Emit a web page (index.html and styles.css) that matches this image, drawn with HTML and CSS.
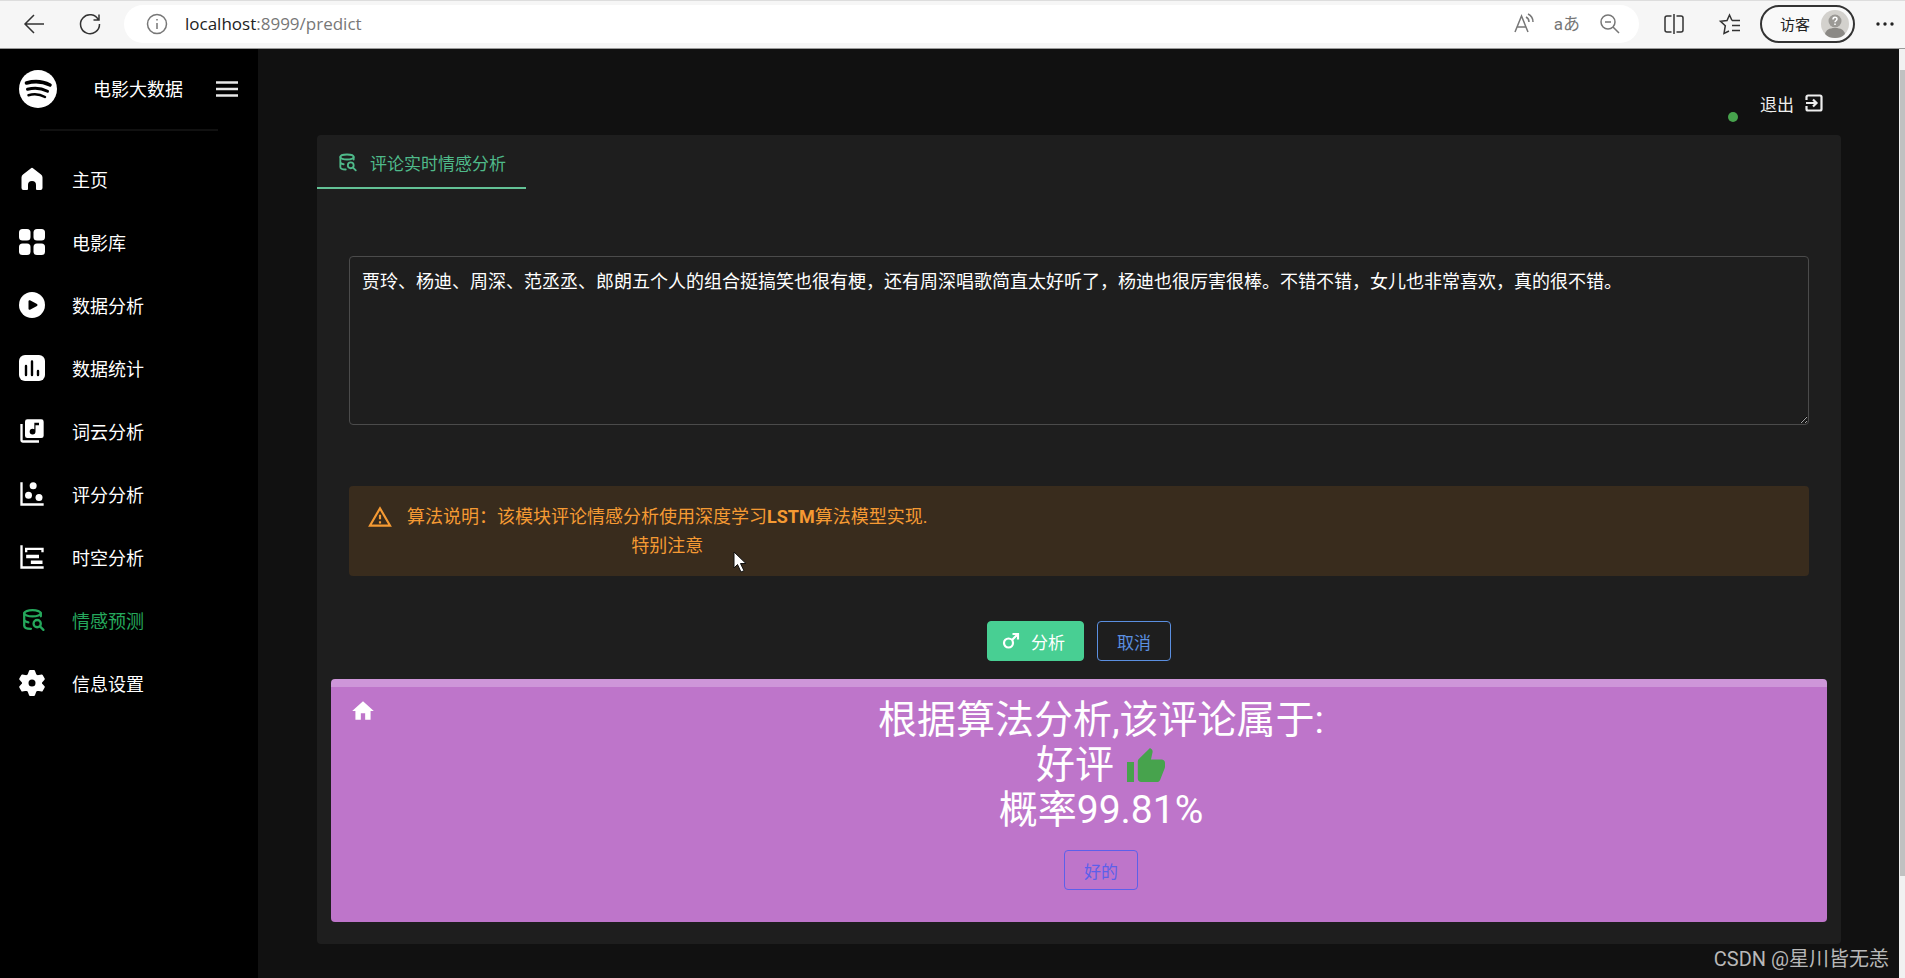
FILE: index.html
```html
<!DOCTYPE html>
<html lang="zh-CN">
<head>
<meta charset="utf-8">
<title>电影大数据</title>
<link rel="stylesheet" href="styles.css">
</head>
<body>
<svg class="defs" width="0" height="0" aria-hidden="true">
  <symbol id="db-search" viewBox="0 0 24 24">
    <g fill="none" stroke="currentColor" stroke-width="2.200" stroke-linecap="round" stroke-linejoin="round">
      <ellipse cx="12" cy="6" rx="8" ry="3"/>
      <path d="M4 6v6c0 1.200 1.600 2.300 4 2.700M20 6v3M4 12v6c0 1.700 2.700 3 6.500 3"/>
      <circle cx="16.500" cy="16" r="3.500"/><path d="m19.200 18.700 3.300 3.300"/>
    </g>
  </symbol>
</svg>

<header class="browser">
  <button class="tool" aria-label="后退"><svg viewBox="0 0 24 24" width="24" height="24"><path d="M22 12H3M12 3l-9 9 9 9"/></svg></button>
  <button class="tool reload" aria-label="刷新"><svg viewBox="0 0 24 24" width="24" height="24"><path d="M20.500 8A9.500 9.500 0 1 0 21.500 12M21 2.500V8h-5.500"/></svg></button>
  <div class="address">
    <svg class="grey" viewBox="0 0 24 24" width="24" height="24"><circle cx="12" cy="12" r="9.500"/><path d="M12 11v6M12 7v1.500"/></svg>
    <span class="url"><b>localhost</b>:8999/predict</span>
    <button class="tool grey" aria-label="大声朗读"><svg viewBox="0 0 24 24" width="24" height="24"><path d="M3 20 9.500 4 16 20M5.500 15h8M14 5c2 1 3 3 3 5M16 2c3 1.500 5 4.500 5 8"/></svg></button>
    <button class="tool translate" aria-label="翻译">aあ</button>
    <button class="tool grey" aria-label="缩小"><svg viewBox="0 0 24 24" width="24" height="24"><circle cx="10" cy="10" r="7"/><path d="m15 15 6 6M7 10h6"/></svg></button>
  </div>
  <button class="tool" aria-label="分屏"><svg viewBox="0 0 24 24" width="24" height="24"><path d="M9.500 4H5a2 2 0 0 0-2 2v12a2 2 0 0 0 2 2h4.500M14.500 4H19a2 2 0 0 1 2 2v12a2 2 0 0 1-2 2h-4.500M12 2v20"/></svg></button>
  <button class="tool" aria-label="收藏夹"><svg viewBox="0 0 24 24" width="24" height="24"><path d="M14 8.500 11.500 3 9 8.500l-6.500.8 4.800 4.400L6 21.500l5-2.500M14 8.500h8M14 13.500h8M14 18.500h8"/></svg></button>
  <button class="profile">访客
    <svg viewBox="0 0 28 28" width="28" height="28"><circle cx="14" cy="14" r="14" fill="#d3d1cd"/><path d="M4 24c1-4 4-6 10-6s9 2 10 6c-3 3-6 4-10 4s-7-1-10-4z" fill="#8b8985"/><circle cx="14" cy="11" r="6.500" fill="#9b9995"/><path d="M12 9.500c0-3 4-3 4-.5 0 1.700-2 1.700-2 3.200M14 13.600v1.400" fill="none" stroke="#fff" stroke-width="1.500"/></svg>
  </button>
  <button class="tool more" aria-label="更多"><svg viewBox="0 0 24 24" width="24" height="24"><g fill="#222" stroke="none"><circle cx="5" cy="12" r="1.700"/><circle cx="12" cy="12" r="1.700"/><circle cx="19" cy="12" r="1.700"/></g></svg></button>
</header>

<div class="app">
  <aside class="sidebar">
    <div class="brand">
      <svg viewBox="0 0 40 40" width="40" height="40"><circle cx="20" cy="20" r="19" fill="#fff"/><g fill="none" stroke="#000" stroke-linecap="round"><path d="M8.500 14c8-2.300 16.500-1.600 23.500 2" stroke-width="3.600"/><path d="M9.500 20.300c6.500-1.900 14-1.200 20 2" stroke-width="3"/><path d="M10.500 26.200c5.500-1.500 11.500-1 16.500 1.800" stroke-width="2.500"/></g></svg>
      <span class="brand-name">电影大数据</span>
      <button class="menu" aria-label="菜单"><svg viewBox="0 0 22 16" width="22" height="16"><path d="M0 1.500h22M0 8h22M0 14.500h22" stroke="#e8e8e8" stroke-width="2.400"/></svg></button>
    </div>
    <hr class="rule">
    <nav class="nav">
      <a href="#"><svg viewBox="0 0 28 28"><path d="M12.700 3.400 5 9.400A4 4 0 0 0 3.500 12.500V23a2 2 0 0 0 2 2h3.500a1 1 0 0 0 1-1v-4a4 4 0 0 1 8 0v4a1 1 0 0 0 1 1h3.500a2 2 0 0 0 2-2V12.500A4 4 0 0 0 23 9.400l-7.700-6a2 2 0 0 0-2.600 0z"/></svg>主页</a>
      <a href="#"><svg viewBox="0 0 28 28"><rect x="1" y="1" width="11.500" height="11.500" rx="3.500"/><rect x="15.500" y="1" width="11.500" height="11.500" rx="3.500"/><rect x="1" y="15.500" width="11.500" height="11.500" rx="3.500"/><rect x="15.500" y="15.500" width="11.500" height="11.500" rx="3.500"/></svg>电影库</a>
      <a href="#"><svg viewBox="0 0 28 28"><circle cx="14" cy="14" r="13"/><path d="M11.500 10.200v7.600l7-3.800z" fill="#000" stroke="#000" stroke-width="2" stroke-linejoin="round"/></svg>数据分析</a>
      <a href="#"><svg viewBox="0 0 28 28"><rect x="1" y="1" width="26" height="26" rx="6"/><path d="M8 12v9M14 7.500v13.500M20 17v4" stroke="#000" stroke-width="2.400" stroke-linecap="round"/></svg>数据统计</a>
      <a href="#"><svg viewBox="0 0 24 24"><path d="M20 2H8a2 2 0 0 0-2 2v12a2 2 0 0 0 2 2h12a2 2 0 0 0 2-2V4a2 2 0 0 0-2-2zm-2 5h-3v5.500A2.500 2.500 0 1 1 12.500 10c.57 0 1.080.19 1.500.510V5h4v2zM4 6H2v14a2 2 0 0 0 2 2h14v-2H4V6z"/></svg>词云分析</a>
      <a href="#"><svg viewBox="0 0 24 24"><path d="M2 2h2v18h18v2H2z"/><circle cx="9" cy="13" r="3"/><circle cx="13" cy="5" r="3"/><circle cx="18" cy="15" r="3"/></svg>评分分析</a>
      <a href="#"><svg viewBox="0 0 24 24"><path d="M2 2h2v18h18v2H2zM7 10h11v3H7zM11 15h10v3H11zM6 4h16v4h-2V6H8v2H6z"/></svg>时空分析</a>
      <a href="#" class="active"><svg viewBox="-2 -1 27 27"><use href="#db-search" width="24" height="24"/></svg>情感预测</a>
      <a href="#"><svg viewBox="0 0 28 28"><path fill-rule="evenodd" d="M12 2h4l1.500 4 2.200 1.300 4.100-.7 2 3.500-2.700 3v1.800l2.700 3-2 3.500-4.100-.7-2.200 1.300L16 26h-4l-1.500-4-2.200-1.300-4.100.7-2-3.500 2.700-3v-1.800l-2.700-3 2-3.500 4.100.7 2.200-1.300zM14 9.500a4.500 4.500 0 1 0 0 9 4.500 4.500 0 0 0 0-9z" stroke="currentColor" stroke-width="2" stroke-linejoin="round"/></svg>信息设置</a>
    </nav>
  </aside>

  <main class="main">
    <div class="topbar">
      <span class="status"></span>
      <a class="logout" href="#">退出
        <svg viewBox="0 0 18 18" width="18" height="18" fill="none" stroke="currentColor" stroke-width="2.200"><path d="M1.500 6V3a1.500 1.500 0 0 1 1.500-1.500h12A1.500 1.500 0 0 1 16.500 3v12a1.500 1.500 0 0 1-1.500 1.500H3A1.500 1.500 0 0 1 1.500 15v-3M1 9h10M8 5.500 11.500 9 8 12.500"/></svg>
      </a>
    </div>

    <section class="card">
      <div class="tabs" role="tablist">
        <button class="tab" role="tab" aria-selected="true"><svg viewBox="0 0 24 24" width="20" height="20"><use href="#db-search"/></svg>评论实时情感分析</button>
      </div>
      <div class="form">
        <textarea class="comment" aria-label="评论内容" spellcheck="false">贾玲、杨迪、周深、范丞丞、郎朗五个人的组合挺搞笑也很有梗，还有周深唱歌简直太好听了，杨迪也很厉害很棒。不错不错，女儿也非常喜欢，真的很不错。</textarea>
        <div class="notice">
          <svg viewBox="0 0 24 24" width="26" height="26" fill="currentColor"><path d="M12 5.990 19.530 19H4.470L12 5.990M12 2 1 21h22L12 2zm1 14h-2v2h2v-2zm0-6h-2v4h2v-4z"/></svg>
          <p class="notice-text">算法说明：该模块评论情感分析使用深度学习<strong>LSTM</strong>算法模型实现.<br>特别注意</p>
          <svg class="cursor" viewBox="0 0 14 22" width="14" height="22"><path d="M1 1v16l3.500-3.500L8 21l3-1.300L7.500 12.500H13z" fill="#fff" stroke="#111"/></svg>
        </div>
        <div class="actions">
          <button class="btn solid"><svg viewBox="0 0 18 18" width="18" height="18" fill="none" stroke="currentColor" stroke-width="2.200"><circle cx="6.500" cy="11" r="4.500"/><path d="m10 8 6-6M10.500 2H16v5.500"/></svg>分析</button>
          <button class="btn outline">取消</button>
        </div>
      </div>
      <div class="result">
        <svg viewBox="0 0 24 24" width="26" height="26" fill="#fff"><path d="M10 20v-6h4v6h5v-8h3L12 3 2 12h3v8z"/></svg>
        <div class="result-body">
          <p class="verdict">根据算法分析,该评论属于:</p>
          <p class="verdict">好评 <svg class="thumb" viewBox="0 0 40 36" width="40" height="36" fill="#47a34d"><path d="M1 14h7v20H1zM39 15c0-2-1.500-3.500-3.500-3.500H25l1.600-7.500v-.6c0-.7-.3-1.300-.7-1.800L24 0 12.800 11c-.7.600-1 1.500-1 2.400v17.300c0 1.900 1.500 3.300 3.400 3.300H31c1.400 0 2.600-.9 3.100-2.100l4.700-12c.1-.4.200-.8.200-1.200z"/></svg></p>
          <p class="verdict">概率99.81%</p>
          <button class="btn ok">好的</button>
        </div>
      </div>
    </section>
  </main>
  <div class="scrollbar"><span class="scroll-thumb"></span></div>
</div>
<div class="watermark">CSDN @星川皆无恙</div>
</body>
</html>
```
FILE: styles.css
```css
* { box-sizing: border-box; }

body {
  margin: 0;
  height: 100vh;
  display: flex;
  flex-direction: column;
  overflow: hidden;
  background: #111;
  color: #fff;
  font-family: Roboto, "Noto Sans CJK SC", sans-serif;
  font-size: 18px;
}

button, textarea { font: inherit; color: inherit; }
button { cursor: pointer; }
p { margin: 0; }
svg { flex: none; }
.defs { position: absolute; }

/* Browser toolbar */
.browser {
  flex: none;
  height: 49px;
  display: flex;
  align-items: center;
  padding: 0 8px 2px 22px;
  background: #f6f6f6;
  border-top: 1px solid #ddd;
  border-bottom: 1px solid #999;
}
.tool {
  display: flex;
  padding: 0;
  border: 0;
  background: none;
}
.browser svg { fill: none; stroke: #333; stroke-width: 1.5; }
.browser .grey, .browser .grey svg { stroke: #777; }
.address {
  flex: 1;
  height: 38px;
  display: flex;
  align-items: center;
  padding: 0 17px 0 21px;
  gap: 16px;
  border-radius: 19px;
  background: #fff;
}
.url {
  flex: 1;
  font-family: "Open Sans", sans-serif;
  font-size: 17px;
  color: #777;
}
.url b { font-weight: 400; color: #222; }
.translate {
  width: 30px;
  justify-content: center;
  font-size: 17px;
  line-height: 24px;
  color: #777;
}
.browser > .tool + .tool { margin-left: 32px; }
.browser > .reload { margin-right: 22px; }
.address + .tool { margin-left: 23px; }
.profile {
  display: flex;
  align-items: center;
  gap: 11px;
  height: 38px;
  margin: 0 18px;
  padding: 0 4px 0 18px;
  border: 2px solid #333;
  border-radius: 19px;
  background: #f9f9f9;
  color: #222;
  font-size: 15px;
}
.profile svg { stroke: none; }

/* Shell */
.app { flex: 1; min-height: 0; display: flex; }
.sidebar { flex: none; width: 258px; background: #000; }
.brand {
  display: flex;
  align-items: center;
  height: 80px;
  padding: 0 20px 0 18px;
}
.brand-name { margin-left: 35px; padding-bottom: 2px; }
.menu {
  display: flex;
  margin-left: auto;
  padding: 0;
  border: 0;
  background: none;
}
.rule {
  height: 2px;
  margin: 0 40px;
  border: 0;
  background: #111;
}
.nav { margin-top: 16px; }
.nav a {
  display: flex;
  align-items: center;
  gap: 26px;
  height: 63px;
  padding-left: 18px;
  color: #fff;
  text-decoration: none;
}
.nav svg { width: 28px; height: 28px; fill: currentColor; }
.nav .active { color: #25a85c; }

.main { flex: 1; min-width: 0; padding: 0 58px 0 59px; }
.topbar {
  display: flex;
  justify-content: flex-end;
  height: 86px;
  padding: 39px 18px 0 0;
}
.status {
  width: 10px;
  height: 10px;
  margin: 24px 22px 0 0;
  border-radius: 50%;
  background: #47a34d;
}
.logout {
  display: flex;
  align-items: center;
  gap: 11px;
  height: 30px;
  font-size: 17px;
  color: #eee;
  text-decoration: none;
}
.card { padding-bottom: 22px; border-radius: 4px; background: #1e1e1e; }

.tab {
  display: flex;
  align-items: center;
  gap: 13px;
  height: 54px;
  padding: 2px 20px 0 20px;
  border: 0;
  border-bottom: 2px solid #63c296;
  background: none;
  color: #4fba8a;
  font-size: 17px;
}
.form { padding: 67px 32px 18px; }
.comment {
  display: block;
  width: 100%;
  height: 169px;
  padding: 12px;
  border: 1px solid #4b4b4b;
  border-radius: 4px;
  outline: 0;
  background: transparent;
  line-height: 26px;
  resize: vertical;
}
.notice {
  position: relative;
  display: flex;
  align-items: flex-start;
  gap: 14px;
  margin-top: 61px;
  padding: 16px 18px;
  border-radius: 4px;
  background: #392c1d;
  color: #f59a33;
}
.notice > svg:first-child { margin-top: 2px; }
.notice-text { line-height: 29px; text-align: center; }
.cursor { position: absolute; left: 384px; top: 65px; }

.actions {
  display: flex;
  justify-content: center;
  gap: 13px;
  margin-top: 45px;
}
.btn {
  display: flex;
  align-items: center;
  gap: 11px;
  height: 40px;
  padding: 0 19px;
  border: 1px solid;
  border-radius: 4px;
  background: none;
  font-size: 17px;
}
.solid { padding: 0 18px 0 14px; border-color: #48cf93; background: #48cf93; }
.outline { color: #5b8fe0; }
.result {
  display: flex;
  align-items: flex-start;
  gap: 18px;
  margin: 0 14px;
  padding: 11px 19px 32px;
  border-top: 8px solid #ce96d9;
  border-radius: 4px;
  background: #be75ca;
}
.result-body {
  flex: 1;
  display: flex;
  flex-direction: column;
  align-items: center;
}
.verdict {
  display: flex;
  align-items: center;
  gap: 12px;
  font-size: 39px;
  line-height: 45px;
}
.ok { margin-top: 17px; color: #5c60ea; }

/* Page scrollbar */
.scrollbar {
  flex: none;
  width: 6px;
  padding: 21px 0 102px 1px;
  display: flex;
  background: #f1f1f1;
}
.scroll-thumb { flex: 1; background: #c1c1c1; }

.watermark {
  position: absolute;
  right: 16px;
  bottom: 4px;
  font-size: 20px;
  line-height: 30px;
  color: #b8b8b8;
}
```
